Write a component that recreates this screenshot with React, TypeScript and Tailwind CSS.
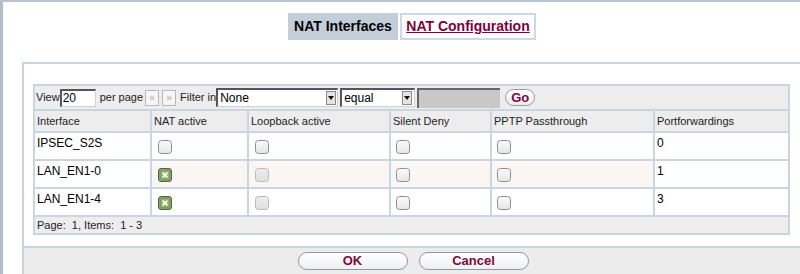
import React from "react";

const F = { fontFamily: '"Liberation Sans", Arial, sans-serif' };

function Check({ kind }: { kind: "off" | "dis" | "on" }) {
  if (kind === "on")
    return (
      <svg width="14" height="14" viewBox="0 0 14 14" className="block">
        <rect x="0.5" y="0.5" width="13" height="13" rx="2.5" fill="#86a85e" stroke="#5a5a5a" />
        <rect x="2.5" y="2.5" width="9" height="9" rx="1" fill="#93b46b" stroke="#6f8f4c" strokeWidth="0.6" />
        <path d="M4.6 4.6 L9.4 9.4 M9.4 4.6 L4.6 9.4" stroke="#ffffff" strokeWidth="1.8" />
      </svg>
    );
  const dis = kind === "dis";
  return (
    <svg width="14" height="14" viewBox="0 0 14 14" className="block">
      <defs>
        <linearGradient id={dis ? "gd" : "go"} x1="0" y1="0" x2="0" y2="1">
          <stop offset="0" stopColor={dis ? "#ececec" : "#fbfbfb"} />
          <stop offset="1" stopColor={dis ? "#e0e0e0" : "#e6e6e6"} />
        </linearGradient>
      </defs>
      <rect x="0.5" y="0.5" width="13" height="13" rx="3" fill={`url(#${dis ? "gd" : "go"})`} stroke={dis ? "#b9b9b9" : "#8f8f8f"} />
    </svg>
  );
}

function Arrow() {
  return (
    <div className="w-[10px] h-[14px] bg-[#e4e4e4] border border-[#8a8a8a] flex items-center justify-center">
      <svg width="6" height="4" viewBox="0 0 6 4">
        <path d="M0 0 L6 0 L3 4 Z" fill="#111" />
      </svg>
    </div>
  );
}

const cellBase = "bg-white text-[12px] leading-[14px] text-black pl-[2px] pt-[3px]";

function Row({ name, nat, loop, pf, alt }: { name: string; nat: "off" | "on"; loop: "off" | "dis"; pf: string; alt?: boolean }) {
  const bg = alt ? "bg-[#faf6f4]" : "bg-white";
  return (
    <>
      <div className={`${cellBase} ${bg} h-[26px]`}>{name}</div>
      <div className={`${bg} pl-[6px] pt-[7px]`}><Check kind={nat} /></div>
      <div className={`${bg} pl-[6px] pt-[7px]`}><Check kind={loop} /></div>
      <div className={`${bg} pl-[5px] pt-[7px]`}><Check kind="off" /></div>
      <div className={`${bg} pl-[5px] pt-[7px]`}><Check kind="off" /></div>
      <div className={`${cellBase} ${bg}`}>{pf}</div>
    </>
  );
}

const inset = "bg-white border-t-2 border-l-2 border-t-[#555] border-l-[#555] border-r border-b border-r-[#d0d0d0] border-b-[#d0d0d0]";

export default function App() {
  const hdr = "bg-[#ededed] text-[11px] leading-[14px] text-[#222] pl-[2px] pt-[3px] h-[20px]";
  return (
    <div style={F} className="w-[800px] h-[274px] overflow-hidden bg-white border-l-[3px] border-l-[#aebdcc] border-t-2 border-t-[#b7c5d3] box-border">
      <div className="ml-[19px] w-[780px]">
        <div className="flex justify-center pt-[11px] gap-[2px] text-[14px] font-bold">
          <div className="w-[110px] h-[27px] bg-[#c4ced9] text-black flex items-center justify-center">NAT Interfaces</div>
          <div className="w-[136px] h-[27px] bg-white border-2 border-[#cfd8e2] flex items-center justify-center">
            <span className="text-[#80003f] underline">NAT Configuration</span>
          </div>
        </div>
        <div className="mt-[22px] border-l-2 border-t-2 border-[#c8d4e0] h-[300px]">
          <div className="pl-[9px] pt-[20px]">
            <div className="w-[757px] grid grid-cols-[115px_95px_140px_99px_161px_133px] gap-[2px] bg-[#c8d5e2] p-[2px]">
              <div className="col-span-6 bg-[#ededed] h-[23px] flex items-center pl-[1px] text-[11px] text-[#222] whitespace-nowrap">
                <span>View</span>
                <div className={`w-[36px] h-[18px] ${inset} text-[12px] text-black pl-[1px] leading-[15px]`}>20</div>
                <span className="ml-[4px]">per page</span>
                <div className="ml-[2px] w-[14px] h-[16px] bg-[#f6f6f6] border border-[#b8b8b8] text-[10px] text-[#a8a8a8] leading-[13px] text-center">«</div>
                <div className="ml-[3px] w-[14px] h-[16px] bg-[#f6f6f6] border border-[#b8b8b8] text-[10px] text-[#a8a8a8] leading-[13px] text-center">»</div>
                <span className="ml-[4px]">Filter in</span>
                <div className={`w-[122px] h-[19px] ${inset} flex items-center justify-between pr-[1px]`}>
                  <span className="text-[12px] text-black pl-[2px]">None</span>
                  <Arrow />
                </div>
                <div className={`ml-[2px] w-[75px] h-[19px] ${inset} flex items-center justify-between pr-[2px]`}>
                  <span className="text-[12px] text-black pl-[2px]">equal</span>
                  <Arrow />
                </div>
                <div className="ml-[2px] w-[83px] h-[20px] bg-[#c8c8c8] border-t-2 border-l-2 border-t-[#666] border-l-[#666]" />
                <div className="ml-[5px] w-[30px] h-[17px] rounded-full border border-[#9a9a9a] bg-gradient-to-b from-white to-[#ececec] flex items-center justify-center text-[13px] font-bold text-[#7b0a45]">Go</div>
              </div>
              <div className={hdr}>Interface</div>
              <div className={hdr}>NAT active</div>
              <div className={hdr}>Loopback active</div>
              <div className={hdr}>Silent Deny</div>
              <div className={hdr}>PPTP Passthrough</div>
              <div className={hdr}>Portforwardings</div>
              <Row name="IPSEC_S2S" nat="off" loop="off" pf="0" />
              <Row name="LAN_EN1-0" nat="on" loop="dis" pf="1" alt />
              <Row name="LAN_EN1-4" nat="on" loop="dis" pf="3" />
              <div className="col-span-6 bg-[#ededed] h-[16px] text-[11px] leading-[14px] text-[#222] pl-[2px] pt-[1px] whitespace-pre">Page:  1, Items:  1 - 3</div>
            </div>
          </div>
          <div className="mt-[11px] border-t-2 border-[#c8d4e0] bg-[#ececec] h-[40px] flex justify-center gap-[11px] pt-[4px] text-[13px] font-bold text-[#7b0a3c]">
            <div className="w-[110px] h-[18px] rounded-full border border-[#8c9aa8] bg-gradient-to-b from-white to-[#f0f0f0] flex items-center justify-center">OK</div>
            <div className="w-[110px] h-[18px] rounded-full border border-[#8c9aa8] bg-gradient-to-b from-white to-[#f0f0f0] flex items-center justify-center">Cancel</div>
          </div>
        </div>
      </div>
    </div>
  );
}
